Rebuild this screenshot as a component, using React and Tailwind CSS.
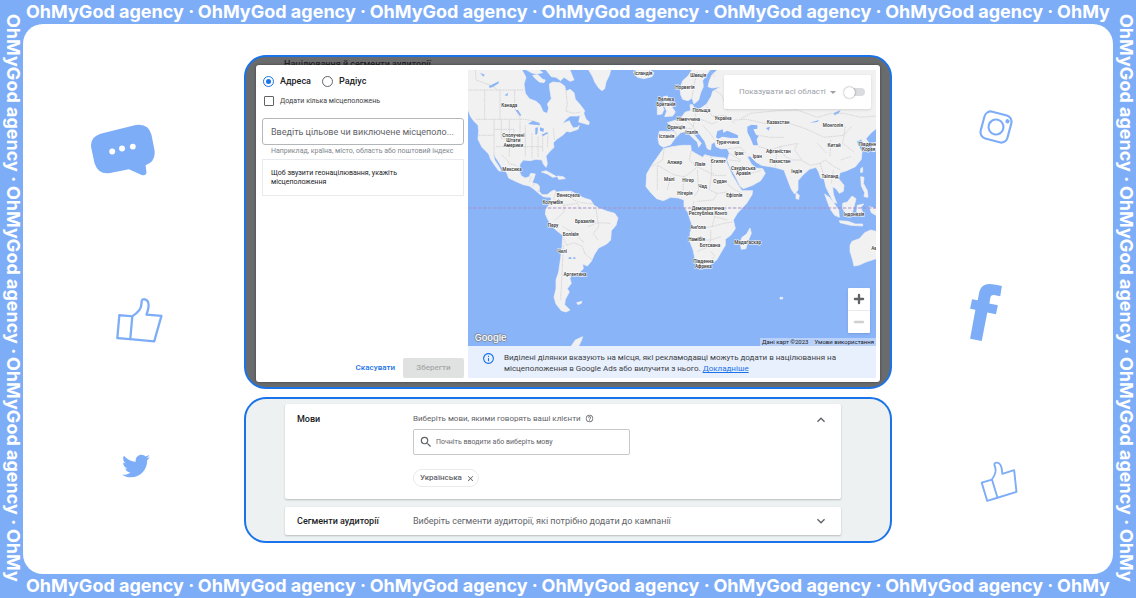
import React, { useState } from 'react';
import { Minus, Plus } from 'lucide-react';
import { MdClose, MdExpandLess, MdExpandMore, MdHelpOutline, MdInfoOutline, MdSearch } from 'react-icons/md';
import { FaTwitter } from 'react-icons/fa';

const PHRASE = 'OhMyGod agency ·';

// Map outlines, drawn on a 1224 x 828 canvas that starts at 12,30
const LAND = [
  // North and Central America
  'M12 30H174L186 52 180 72 184 100 196 116 216 124 228 134 238 156 250 160 254 144 250 132 262 116 258 92 256 72 266 66 288 68 302 78 306 94 318 88 330 98 334 118 350 136 362 152 358 164 340 168 318 168 306 178 296 190 302 188 316 182 320 192 328 204 340 202 346 196 342 208 318 216 308 214 296 226 278 238 268 248 270 262 256 276 246 288 250 312 246 322 238 312 234 300 216 298 198 302 178 300 168 312 166 334 172 348 184 354 196 350 200 340 214 342 208 360 204 368 220 372 226 378 226 394 234 404 250 404 262 398 266 408 252 412 238 410 224 400 208 386 196 378 178 374 154 364 134 354 128 338 116 326 104 306 92 288 88 282 92 300 106 322 112 334 104 332 92 316 80 298 74 282 54 262 42 238 44 212 42 196 30 184 20 170 12 150Z',
  'M348 168L360 162 366 178 376 186 374 194 358 190 344 186Z',
  'M206 46L222 44 236 58 244 60 240 68 226 66 212 54Z',
  'M246 30H318L330 60 318 64 300 52 290 62 276 52 262 50Z',
  'M188 30H226L236 38 216 42 202 38Z',
  'M232 336L246 332 264 342 278 350 266 352 250 342Z',
  'M280 348L298 350 304 356 284 358Z',
  // Greenland, Iceland
  'M374 30H440L436 46 426 66 422 86 414 92 404 84 392 66 386 50Z',
  'M508 36L520 30 556 30 570 38 564 50 540 56 520 52Z',
  // South America
  'M250 404L262 394 272 390 276 396 300 394 322 394 340 404 360 414 380 420 390 436 404 444 430 454 452 460 462 474 456 496 442 512 440 540 428 552 404 564 392 582 382 604 370 618 356 612 358 626 346 638 322 644 318 656 322 670 310 686 316 696 304 718 302 734 318 750 306 756 292 752 276 732 270 712 276 686 276 660 284 636 290 594 294 560 296 526 278 512 262 496 250 476 244 462 246 446 256 434 262 416Z',
  'M338 728L354 724 352 730 342 734Z',
  'M322 858L334 840 356 830 352 842 344 858Z',
  // British Isles
  'M598 110L610 108 614 124 622 138 634 156 626 168 602 170 608 154 602 140Z',
  'M580 142L594 136 600 148 594 162 580 164Z',
  // Scandinavia
  'M648 84L656 62 672 48 684 30H738L728 44 716 62 718 80 710 98 704 120 690 132 684 114 672 122 656 118 650 104Z',
  // Eurasia
  'M760 30L744 44 736 62 732 80 744 84 770 80 746 94 742 108 728 132 708 146 692 148 686 134 678 134 680 152 664 156 652 172 636 180 610 188 628 200 632 214 586 214 582 236 586 254 598 262 620 254 634 234 650 218 668 214 684 232 700 246 704 262 712 250 700 236 686 218 692 208 706 222 722 244 730 266 740 270 742 252 752 246 756 260 770 266 790 266 796 280 790 300 798 322 812 346 828 378 838 386 866 376 890 362 904 340 896 326 876 324 862 312 850 290 858 288 876 306 892 316 930 322 946 326 960 330 968 352 982 388 992 402 1002 390 1002 362 1016 346 1036 328 1056 322 1064 336 1070 354 1080 356 1086 382 1096 402 1108 426 1118 430 1108 402 1106 380 1116 386 1126 400 1138 394 1140 376 1124 356 1128 338 1148 332 1174 320 1192 298 1194 276 1182 254 1178 244 1192 238 1202 258 1214 262 1214 248 1206 236 1220 220 1236 206V30Z',
  // Africa
  'M598 266L624 260 656 256 680 256 682 272 694 280 716 292 722 284 744 290 784 294 790 312 804 344 822 374 834 392 866 392 864 404 848 430 820 460 808 480 814 506 800 526 784 538 784 556 772 576 758 600 736 616 706 624 694 604 688 572 678 546 678 518 686 500 678 478 672 458 660 440 660 420 644 414 620 412 598 422 578 416 562 400 546 380 548 342 564 314 580 292Z',
  'M858 504L862 520 850 548 846 566 832 568 828 548 834 532 848 522Z',
  'M996 398L1006 406 1004 418 996 416Z',
  // South-east Asia and Australia
  'M1082 402L1096 412 1110 430 1124 450 1126 472 1112 466 1098 446Z',
  'M1126 482L1152 484 1174 492 1196 492 1196 498 1160 496 1128 488Z',
  'M1136 430L1150 426 1164 408 1176 416 1170 440 1164 460 1144 458 1136 446Z',
  'M1180 436L1200 432 1190 442 1198 462 1186 464 1178 456Z',
  'M1190 350L1200 352 1198 370 1210 392 1212 412 1200 410 1202 398 1192 378Z',
  'M1190 326L1196 322 1196 336 1190 338Z',
  'M1216 440L1236 446V466L1222 458Z',
  'M1224 262L1236 246V270L1228 276Z',
  'M1158 556L1164 544 1186 536 1202 518 1220 510 1236 514V596L1206 606 1184 616 1170 618 1166 600 1158 574Z',
  'M948 712H956V717H948Z',
];

const WATER = [
  'M192 192L206 182 226 188 228 196 210 194Z',
  'M214 224L214 204 222 202 220 222Z',
  'M228 202L240 206 238 216 228 212Z',
  'M232 224L250 216 252 220 238 228Z',
  'M154 150L162 150 172 166 168 168Z',
  'M74 78L88 72 104 64 104 70 88 80 78 84Z',
  'M48 38L62 44 58 50Z',
  'M122 106L132 98 130 108Z',
  'M756 232L760 214 776 208 778 218 790 212 822 226 822 234 800 234 776 230 762 236Z',
  'M850 200L862 194 880 196 880 206 868 208 876 224 884 228 878 238 882 256 868 256 860 236 850 216Z',
  'M906 204L918 200 914 212Z',
  'M1036 188L1066 180 1060 186Z',
  'M1108 160L1130 150 1124 160 1112 166Z',
  'M794 406L804 402 802 414 792 414Z',
  'M782 442L786 462 782 462Z',
  'M314 592H322V597H314ZM328 592H334V597H328Z',
];

const BORDERS = [
  'M12 90H180M62 90V178M108 90V178M152 90V144L170 178',
  'M36 178H184L212 184 226 196M44 226H90M90 178V290M112 180V236M90 208H150M112 236H170M136 180V290M168 184V260M184 196V290M150 208V236M96 260H236M204 220V296M222 230V292M236 226V276M252 220L250 262M268 206L272 240M112 284L130 300 136 312 152 314 170 330',
  'M306 94L310 132 306 154 330 160 350 156M34 30L36 60 80 76 100 88',
  'M202 350L196 366M212 372L204 380M226 392L218 396',
  'M276 396L268 416 286 430 300 436 300 456 284 470 272 482M322 396L328 420 352 428 388 432M300 436L340 430 352 450M296 500L318 512 336 520 350 540 362 548M296 530L308 556 330 548 356 560 362 580M298 556L294 640 290 720M362 580L384 600M372 500L400 488 440 490M396 446L404 500 388 520 402 540',
  'M632 214L640 232M634 190L660 204 684 206M654 172L668 184 690 200M692 148L696 176 716 180M716 180L744 192 760 184M728 140L744 168 784 166 812 190M744 84L772 104 790 148M696 176L686 200 700 216M716 196L738 220 752 240M792 266L830 262 846 280M796 280L830 300M700 36L690 74 684 114M738 30L752 50',
  'M810 180L848 178 900 190 960 186 1008 200M830 176L860 160 940 152 1000 150 1060 172 1100 160 1140 160 1190 172 1236 168M1008 200L1034 210 1080 232 1140 226 1162 200M880 226L922 232 960 232M884 260L920 270 948 260 1000 250M948 260L962 288 984 300 1010 300 1040 316 1068 310 1084 300M938 280L934 320M1000 250L992 270 1014 300M1068 310L1078 340M1084 300L1110 320 1130 330M1108 332L1102 370M838 334L860 340 890 332M798 300L830 304',
  'M682 272L676 300 700 320 740 340 750 340M742 290V346M786 346H742M600 268L596 300 562 320M582 316L628 344 660 350 680 338 700 320M580 316V390M620 350L610 390M660 350L656 400M700 330L704 390 690 410M742 346L736 390 760 400 790 396M760 400L748 420 700 424M790 372L810 388 834 400M690 424L684 450 740 456 752 470 744 500 700 506M744 500L780 490 806 486M690 540H740V510M700 574L734 560 740 540 770 530M752 470L790 480M740 574L752 588 744 598',
  'M1144 200L1136 250 1170 276M1100 240L1098 290M1060 250L1088 280M1160 290L1130 300',
];

const LABELS = [
  [136, 142, ['Канада']],
  [148, 231, ['Сполучені', 'Штати', 'Америки']],
  [144, 334, ['Мексика']],
  [538, 45, ['Ісландія']],
  [606, 122, ['Велика', 'Британія']],
  [608, 233, ['Іспанія']],
  [636, 206, ['Франція']],
  [673, 182, ['Німеччина']],
  [683, 223, ['Італія']],
  [703, 50, ['Швеція']],
  [663, 86, ['Норвегія']],
  [712, 156, ['Польща']],
  [777, 180, ['Україна']],
  [791, 251, ['Туреччина']],
  [825, 286, ['Ірак']],
  [880, 293, ['Іран']],
  [942, 191, ['Казахстан']],
  [1107, 200, ['Монголія']],
  [1110, 260, ['Китай']],
  [943, 278, ['Афганістан']],
  [948, 308, ['Пакистан']],
  [998, 339, ['Індія']],
  [1098, 354, ['Таїланд']],
  [1214, 258, ['Південна', 'Корея']],
  [838, 329, ['Саудівська', 'Аравія']],
  [763, 310, ['Єгипет']],
  [708, 317, ['Лівія']],
  [632, 312, ['Алжир']],
  [616, 364, ['Малі']],
  [672, 365, ['Нігер']],
  [716, 384, ['Чад']],
  [768, 369, ['Судан']],
  [663, 404, ['Нігерія']],
  [811, 410, ['Ефіопія']],
  [732, 450, ['Демократична', 'Республіка Конго']],
  [702, 508, ['Анґола']],
  [698, 542, ['Намібія']],
  [738, 561, ['Ботсвана']],
  [718, 608, ['Південна', 'Африка']],
  [851, 552, ['Мадаґаскар']],
  [1170, 468, ['Індонезія']],
  [1230, 571, ['Ав']],
  [313, 410, ['Венесуела']],
  [266, 431, ['Колумбія']],
  [267, 501, ['Перу']],
  [362, 490, ['Бразилія']],
  [320, 528, ['Болівія']],
  [294, 579, ['Чилі']],
  [333, 648, ['Аргентина']],
];

const WorldMap = () => (
  <svg
    className="block h-full w-full font-[Roboto,sans-serif]"
    viewBox="12 30 1224 828"
    preserveAspectRatio="xMidYMid slice"
    role="img"
    aria-label="Карта світу"
  >
    <rect x="0" y="0" width="1260" height="880" fill="#8ab4f8" />
    <g fill="#f1f1f2" stroke="#f1f1f2" strokeWidth="2" strokeLinejoin="round">
      {LAND.map((d) => <path key={d} d={d} />)}
    </g>
    <g fill="#8ab4f8">
      {WATER.map((d) => <path key={d} d={d} />)}
    </g>
    <g fill="none" stroke="#c9cacc" strokeWidth="2" strokeDasharray="5 2">
      {BORDERS.map((d) => <path key={d} d={d} />)}
    </g>
    <path d="M12 444H1236" stroke="#a88fc4" strokeWidth="3" strokeDasharray="10 5" />
    <g
      fill="#3c4043"
      stroke="#ffffff"
      strokeWidth="3"
      strokeLinejoin="round"
      paintOrder="stroke"
      fontSize="14"
      fontWeight="600"
      textAnchor="middle"
    >
      {LABELS.map(([x, y, lines]) => (
        <text key={lines[0] + x} x={x} y={y}>
          {lines.map((line, i) => (
            <tspan key={line} x={x} dy={i ? 15 : 0}>{line}</tspan>
          ))}
        </text>
      ))}
    </g>
    <text
      x="32"
      y="844"
      fill="#ffffff"
      stroke="#7a8796"
      strokeWidth="4"
      paintOrder="stroke"
      fontSize="28"
      fontWeight="500"
      className="font-[Inter,sans-serif]"
    >
      Google
    </text>
  </svg>
);

const Thumb = ({ className }) => (
  <svg className={className} viewBox="0 0 46 46" fill="none" stroke="currentColor" strokeWidth="2.3" strokeLinejoin="round">
    <path d="M2 20H15V43H2Z" />
    <path d="M15 20C20 16 23 12 23 8V4C23 1 29 1 30 6C31 10 30 13 29 17H44L39 43H15" />
  </svg>
);

const ChatBubble = ({ className }) => (
  <svg className={className} viewBox="0 0 66 54">
    <path
      fill="currentColor"
      d="M10 10L46 1Q59-1 62 11L65 26Q67 38 56 42L57 50Q56 53 52 52L39 46 20 50Q8 52 4 40L1 26Q-2 14 10 10Z"
    />
    <g fill="#ffffff">
      <circle cx="22" cy="28" r="3" />
      <circle cx="32" cy="25" r="3" />
      <circle cx="43" cy="23" r="3" />
    </g>
  </svg>
);

const InstagramMark = ({ className }) => (
  <svg className={className} viewBox="0 0 30 30" fill="none" stroke="currentColor" strokeWidth="2">
    <rect x="2" y="2" width="26" height="26" rx="6" />
    <circle cx="15" cy="15" r="7" />
    <circle cx="24" cy="7" r="1" fill="currentColor" />
  </svg>
);

const FacebookMark = ({ className }) => (
  <svg className={className} viewBox="57 38 102 178" fill="currentColor">
    <path d="M156 47L151 78 132 74Q122 73 121 83L118 100 144 105 138 132 112 127 95 213 60 206 76 119 60 116 66 87 83 90 88 64Q94 40 120 41 138 42 156 47Z" />
  </svg>
);

const Ticker = ({ vertical, count }) => (
  <div
    aria-hidden={vertical}
    className={
      vertical
        ? 'flex w-[23px] shrink-0 items-center justify-between pt-[14px] pb-4 pl-[3px] leading-5 [writing-mode:vertical-rl]'
        : 'flex h-6 items-center justify-between px-[3px]'
    }
  >
    {Array.from({ length: count }, (_, i) => <span key={i}>{PHRASE}</span>)}
    <span>OhMy</span>
  </div>
);

const LocationForm = () => {
  const [mode, setMode] = useState('address');
  return (
    <form className="flex w-[202px] shrink-0 flex-col" onSubmit={(e) => e.preventDefault()}>
      <div className="flex items-center gap-[11px] pt-[5px] pl-px text-[9px] leading-[12px] font-medium text-[#202124]">
        {[['address', 'Адреса'], ['radius', 'Радіус']].map(([value, label]) => (
          <label key={value} className="flex items-center gap-[6px]">
            <input
              type="radio"
              name="mode"
              checked={mode === value}
              onChange={() => setMode(value)}
              className="m-0 size-[11px] appearance-none rounded-full border border-[#5f6368] bg-clip-content p-[2px] checked:border-[#1a73e8] checked:bg-[#1a73e8]"
            />
            {label}
          </label>
        ))}
      </div>
      <label className="mt-[9px] ml-[2px] flex items-center gap-[6px] text-[7px] leading-[10px] text-[#3c4043]">
        <input type="checkbox" className="m-0 size-[10px] appearance-none rounded-[1px] border border-[#5f6368] checked:bg-[#1a73e8]" />
        Додати кілька місцеположень
      </label>
      <input
        type="text"
        aria-label="Місцеположення"
        placeholder="Введіть цільове чи виключене місцеполо..."
        className="mt-3 h-[27px] rounded-[3px] border border-[#b4b7ba] px-2 text-[9px] text-[#3c4043] placeholder:text-[#5f6368]"
      />
      <p className="mt-[2px] pl-[9px] text-[7px] leading-[8px] text-[#80868b]">
        Наприклад, країна, місто, область або поштовий індекс
      </p>
      <p className="mt-1 border border-[#e8eaed] px-2 pt-[9px] pb-2 text-[7px] leading-[9px] text-[#202124]">
        Щоб звузити геонацілювання, укажіть<br />місцеположення
      </p>
      <div className="mt-auto flex justify-end gap-2 text-[8px] leading-[20px] font-medium">
        <button type="button" className="h-5 text-[#1a73e8]">Скасувати</button>
        <button type="submit" disabled className="h-5 w-[61px] rounded-[2px] bg-[#e0e2e1] text-[#a5a8aa]">Зберегти</button>
      </div>
    </form>
  );
};

const MapPane = () => (
  <div className="flex min-w-0 flex-1 flex-col">
    <div className="relative h-[276px]">
      <WorldMap />
      <div className="absolute top-[5px] right-[5px] flex h-[34px] w-[147px] items-center justify-between rounded-[2px] bg-white pr-[6px] pl-[15px] shadow-sm">
        <button type="button" className="flex items-center gap-1 text-[8px] text-[#9aa0a6]">
          Показувати всі області
          <span className="border-x-[3px] border-t-[3px] border-x-transparent border-t-[#9aa0a6]" />
        </button>
        <label className="relative flex h-[11px] w-[21px] items-center">
          <input
            type="checkbox"
            role="switch"
            aria-label="Показувати всі області"
            className="peer m-0 ml-1 h-2 w-[17px] appearance-none rounded-full bg-[#dadce0] checked:bg-[#8ab4f8]"
          />
          <span className="absolute left-0 size-[11px] rounded-full bg-white shadow-[0_0_2px_rgba(0,0,0,0.5)] peer-checked:left-[10px]" />
        </label>
      </div>
      <div className="absolute right-[6px] bottom-[13px] flex w-[22px] flex-col divide-y divide-[#e8eaed] rounded-[1px] bg-white shadow-sm">
        <button type="button" aria-label="Збільшити" className="flex h-[23px] items-center justify-center text-[#5f6368]">
          <Plus className="size-[14px]" strokeWidth={4} />
        </button>
        <button type="button" aria-label="Зменшити" disabled className="flex h-[22px] items-center justify-center text-[#ced0d2]">
          <Minus className="size-[14px]" strokeWidth={4} />
        </button>
      </div>
      <div className="absolute right-0 bottom-0 flex h-2 items-center gap-[6px] bg-[#b9d1f8] px-[2px] text-[6px] leading-[8px] font-normal text-[#202124]">
        <span>Дані карт ©2023</span>
        <a href="#terms">Умови використання</a>
      </div>
    </div>
    <div className="flex h-8 items-start gap-[9px] bg-[#e8f0fe] pt-[6px] pl-[14px] text-[8px] leading-[11px] text-[#3c4043]">
      <MdInfoOutline className="size-[13px] shrink-0 text-[#1a73e8]" />
      <p>
        Виділені ділянки вказують на місця, які рекламодавці можуть додати в націлювання на<br />
        місцеположення в Google Ads або вилучити з нього.{' '}
        <a href="#more" className="text-[#1a73e8] underline">Докладніше</a>
      </p>
    </div>
  </div>
);

const LanguageCard = () => {
  const [languages, setLanguages] = useState(['Українська']);
  return (
    <section className="grid grid-cols-[116px_minmax(0,1fr)_auto] rounded-[2px] bg-white px-3 pt-[10px] pb-3 shadow-[0_1px_2px_rgba(60,64,67,0.3)]">
      <h2 className="text-[9px] leading-[10px] font-medium text-[#202124]">Мови</h2>
      <div>
        <label htmlFor="language" className="flex items-center gap-1 text-[8px] leading-[9px] text-[#5f6368]">
          Виберіть мови, якими говорять ваші клієнти
          <MdHelpOutline className="size-[9px]" />
        </label>
        <div className="mt-[6px] flex h-[26px] w-[217px] items-center gap-[3px] rounded-[2px] border border-[#c6c9cc] pl-[5px]">
          <MdSearch className="size-[14px] text-[#5f6368]" />
          <input
            id="language"
            type="text"
            placeholder="Почніть вводити або виберіть мову"
            className="min-w-0 flex-1 text-[7px] outline-none placeholder:text-[#5f6368]"
          />
        </div>
        <div className="mt-[14px] flex h-[18px]">
          {languages.map((name) => (
            <span key={name} className="flex items-center gap-1 rounded-full border border-[#e8eaed] pr-[3px] pl-[6px] text-[8px] font-medium text-[#5f6368]">
              {name}
              <button
                type="button"
                aria-label={`Вилучити ${name}`}
                className="flex h-[9px] items-center"
                onClick={() => setLanguages(languages.filter((l) => l !== name))}
              >
                <MdClose className="size-[9px]" />
              </button>
            </span>
          ))}
        </div>
      </div>
      <button type="button" aria-label="Згорнути" className="flex h-3 items-center self-start text-[#5f6368]">
        <MdExpandLess className="size-4" />
      </button>
    </section>
  );
};

export default function App() {
  return (
    <div className="flex min-h-screen bg-[#7eadf8] font-[Inter,sans-serif] text-[18px] leading-6 font-bold whitespace-nowrap text-white">
      <Ticker vertical count={3} />
      <div className="flex min-w-0 flex-1 flex-col">
        <Ticker count={6} />
        <main className="grid flex-1 grid-cols-[minmax(0,1fr)_minmax(0,648px)_minmax(0,1fr)] rounded-[20px] bg-white text-[#7eadf8]">
          <div className="flex flex-col pt-[100px]">
            <ChatBubble className="ml-[67px] h-[53px] w-[66px]" />
            <Thumb className="mt-[120px] ml-[94px] size-[46px] rotate-[5deg]" />
            <FaTwitter className="mt-[109px] ml-[99px] size-7" />
          </div>

          <div className="flex flex-col gap-2 py-[31px] font-[Roboto,sans-serif] font-normal">
            <section className="overflow-hidden rounded-[22px] border-2 border-[#1a73e8] bg-[#696b6c] px-[10px] pb-[5px]">
              <div className="h-2 overflow-hidden pl-7 text-[9px] leading-[14px] font-medium text-[#202124]">
                Націлювання й сегменти аудиторії
              </div>
              <div className="flex gap-1 rounded-[3px] bg-white pt-[5px] pr-1 pb-1 pl-[6px] shadow-[0_0_3px_rgba(0,0,0,0.4)]">
                <LocationForm />
                <MapPane />
              </div>
            </section>

            <section className="flex flex-col gap-2 rounded-[22px] border-2 border-[#1a73e8] bg-[#edf1f2] pt-[5px] pr-[49px] pb-[6px] pl-[39px]">
              <LanguageCard />
              <section className="grid grid-cols-[116px_minmax(0,1fr)_auto] items-center rounded-[2px] bg-white px-3 py-[7px] text-[9px] leading-[14px] text-[#5f6368] shadow-[0_1px_2px_rgba(60,64,67,0.3)]">
                <h2 className="font-medium text-[#202124]">Сегменти аудиторії</h2>
                <p>Виберіть сегменти аудиторії, які потрібно додати до кампанії</p>
                <button type="button" aria-label="Розгорнути" className="flex h-[14px] items-center">
                  <MdExpandMore className="size-4" />
                </button>
              </section>
            </section>
          </div>

          <div className="flex flex-col pt-[87px]">
            <InstagramMark className="ml-[88px] size-8 rotate-[15deg]" />
            <FacebookMark className="mt-[140px] ml-[77px] h-[59px] w-[34px]" />
            <Thumb className="mt-[119px] ml-[88px] size-[38px] -rotate-[17deg]" />
          </div>
        </main>
        <Ticker count={6} />
      </div>
      <Ticker vertical count={3} />
    </div>
  );
}
